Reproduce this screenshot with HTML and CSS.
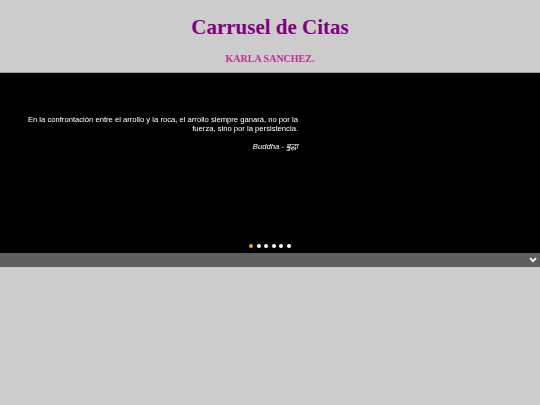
FILE: index.html
```html
<!DOCTYPE html>
<html lang="es">
<head>
<meta charset="utf-8">
<title>Carrusel de Citas</title>
<link rel="stylesheet" href="styles.css">
</head>
<body>
<header class="header">
  <h1 class="title">Carrusel de Citas</h1>
  <h2 class="subtitle">KARLA SANCHEZ.</h2>
</header>
<section class="carousel">
  <div class="slide">
    <blockquote class="quote">
      <p class="quote-text">En la confrontación entre el arrollo y la roca, el arrollo siempre ganará, no por la fuerza, sino por la persistencia.</p>
      <p class="quote-author">Buddha - बुद्धा</p>
    </blockquote>
  </div>
  <div class="dots">
    <span class="dot active"></span>
    <span class="dot"></span>
    <span class="dot"></span>
    <span class="dot"></span>
    <span class="dot"></span>
    <span class="dot"></span>
  </div>
</section>
<div class="toggle-bar">
  <svg class="chevron" width="8" height="6" viewBox="0 0 8 6"><path d="M1 1.2 L4 4.2 L7 1.2" fill="none" stroke="#fff" stroke-width="1.8"/></svg>
</div>
</body>
</html>
```
FILE: styles.css
```css
html, body {
  margin: 0;
  padding: 0;
  background: #cccccc;
}
body {
  font-family: "Liberation Serif", "Times New Roman", serif;
}
.header {
  text-align: center;
  height: 72px;
  border-bottom: 1px solid #9a9a9a;
  box-sizing: content-box;
  overflow: hidden;
}
.title {
  margin: 0;
  padding-top: 15px;
  font-size: 21px;
  line-height: 24px;
  color: #800080;
  font-weight: bold;
}
.subtitle {
  margin: 0;
  padding-top: 13px;
  font-size: 10px;
  line-height: 13px;
  color: #c0309a;
  font-weight: bold;
}
.carousel {
  background: #000;
  height: 180px;
  display: flex;
  flex-direction: column;
}
.slide {
  flex: 1;
  padding-top: 42px;
}
.quote {
  margin: 0 0 0 27px;
  width: 271px;
  text-align: right;
  color: #fff;
  font-family: "Liberation Sans", Arial, sans-serif;
  font-size: 7.65px;
  line-height: 9px;
  will-change: transform;
}
.quote-text {
  margin: 0;
}
.quote-author {
  margin: 9px 0 0;
  font-style: italic;
}
.dots {
  display: flex;
  justify-content: center;
  gap: 3.5px;
  padding-bottom: 5px;
}
.dot {
  width: 4px;
  height: 4px;
  border-radius: 50%;
  background: #fff;
}
.dot.active {
  background: #f0a030;
}
.toggle-bar {
  background: #5e5e5e;
  height: 14px;
  display: flex;
  align-items: center;
  justify-content: flex-end;
  padding-right: 3px;
}
.chevron {
  display: block;
}
```
